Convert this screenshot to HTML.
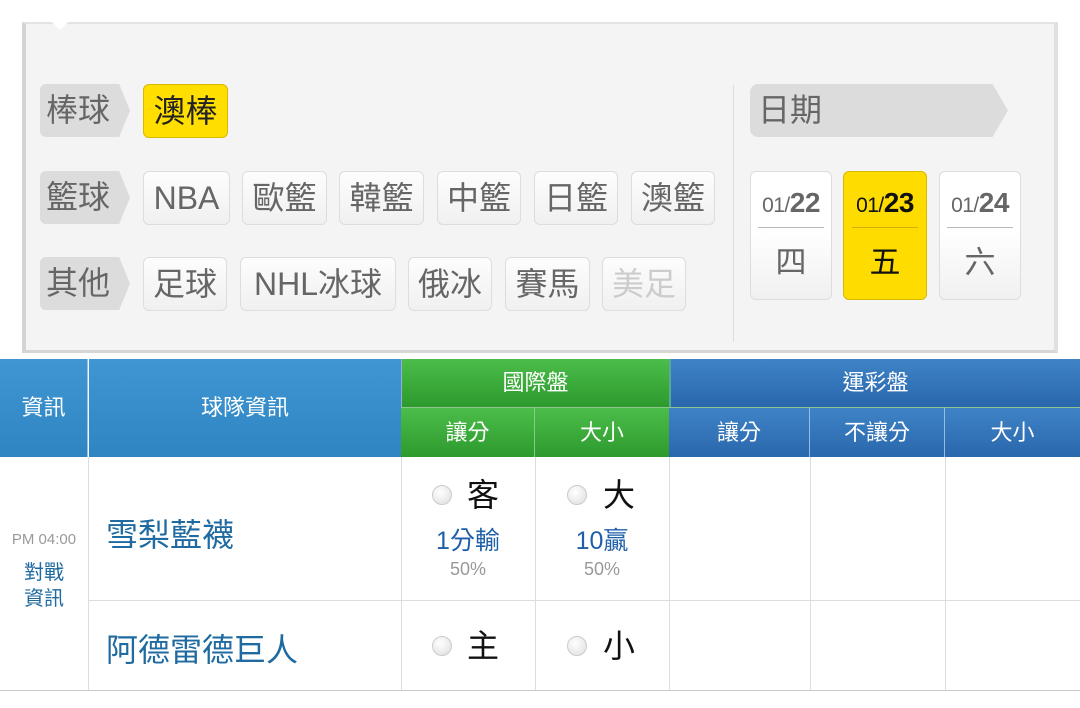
<!DOCTYPE html><html><head><meta charset="utf-8"><style>
*{margin:0;padding:0;box-sizing:border-box}
body{width:1080px;height:708px;background:#fff;position:relative;overflow:hidden;font-family:"Liberation Sans","Noto Sans CJK TC",sans-serif}
.a{position:absolute}
.panel{left:22px;top:22px;width:1036px;height:331px;background:#f4f4f4;border-left:4px solid #d4d4d4;border-right:4px solid #e0e0e0;border-top:2px solid #e4e4e4;border-bottom:3px solid #d6d6d6}
.lab{height:53px;background:#dcdcdc;color:#666;font-size:32px;line-height:53px;padding-left:6px;border-radius:6px 0 0 6px;clip-path:polygon(0 0,88% 0,100% 50%,88% 100%,0 100%)}
.btn{height:54px;background:linear-gradient(#fdfdfd,#f0f0f0);border:1px solid #ddd;border-radius:6px;color:#666;font-size:32px;line-height:52px;text-align:center}
.y{background:#ffde00;border-color:#d9b800;color:#222}
.card{top:171px;width:82px;height:129px;border:1px solid #ddd;border-radius:6px;background:linear-gradient(#fff 0,#fff 46%,#f0f0f0 100%);text-align:center;color:#666}
.card .d{font-size:21px;margin-top:15px;letter-spacing:-0.5px}.card .d b{font-size:28px}
.card hr{border:0;border-top:1px solid #bbb;width:66px;margin:8px auto 0}
.card .w{font-size:31px;margin-top:9px}
.h{color:#fff;font-size:22px;text-align:center}
.b1{background:linear-gradient(#3f96d2,#2f85c2)}
.g{background:linear-gradient(#4bbd4a,#2d9a2d)}
.b2{background:linear-gradient(#3f83c6,#2a67ad)}
.vl{width:1px;background:#ddd}
.hl{height:1px;background:#ddd}
.rad{width:20px;height:20px;border-radius:50%;background:radial-gradient(circle at 40% 35%,#fff,#ddd);border:1px solid #ccc}
.big{font-size:32px;color:#111}
.team{color:#1f6aa0;font-size:32px}
.odd{color:#1f5fa8;font-size:25px;text-align:center;width:134px}
.pct{color:#999;font-size:18px;text-align:center;width:134px}
</style></head><body>
<div class="a panel"></div>
<div class="a" style="left:52px;top:22px;width:16px;height:8px;background:#fff;clip-path:polygon(0 0,100% 0,50% 100%)"></div>
<div class="a lab" style="left:40px;top:84px;width:90px">棒球</div>
<div class="a lab" style="left:40px;top:171px;width:90px">籃球</div>
<div class="a lab" style="left:40px;top:257px;width:90px">其他</div>
<div class="a btn y" style="left:143px;top:84px;width:85px">澳棒</div>
<div class="a btn" style="left:143px;top:171px;width:87px">NBA</div>
<div class="a btn" style="left:242px;top:171px;width:85px">歐籃</div>
<div class="a btn" style="left:339px;top:171px;width:85px">韓籃</div>
<div class="a btn" style="left:437px;top:171px;width:84px">中籃</div>
<div class="a btn" style="left:534px;top:171px;width:84px">日籃</div>
<div class="a btn" style="left:631px;top:171px;width:84px">澳籃</div>
<div class="a btn" style="left:143px;top:257px;width:84px">足球</div>
<div class="a btn" style="left:240px;top:257px;width:156px">NHL冰球</div>
<div class="a btn" style="left:408px;top:257px;width:84px">俄冰</div>
<div class="a btn" style="left:505px;top:257px;width:85px">賽馬</div>
<div class="a btn" style="left:602px;top:257px;width:84px;color:#ccc">美足</div>
<div class="a" style="left:733px;top:85px;width:1px;height:257px;background:#ddd"></div>
<div class="a lab" style="left:750px;top:84px;width:258px;padding-left:8px;clip-path:polygon(0 0,94% 0,100% 50%,94% 100%,0 100%);border-radius:8px 0 0 8px">日期</div>
<div class="a card" style="left:750px"><div class="d">01/<b>22</b></div><hr><div class="w">四</div></div>
<div class="a card" style="left:843px;width:84px;background:#ffdc00;border-color:#d9b800;color:#111"><div class="d">01/<b>23</b></div><hr style="border-color:#d0b000"><div class="w">五</div></div>
<div class="a card" style="left:939px"><div class="d">01/<b>24</b></div><hr><div class="w">六</div></div>

<div class="a h b1" style="left:0;top:359px;width:88px;height:98px;line-height:98px;border-right:1px solid #8cc3e8">資訊</div>
<div class="a h b1" style="left:89px;top:359px;width:312px;height:98px;line-height:98px">球隊資訊</div>
<div class="a h g" style="left:401px;top:359px;width:268px;height:48px;line-height:48px;border-left:1px solid #9ad">國際盤</div>
<div class="a h g" style="left:401px;top:408px;width:134px;height:49px;line-height:49px;border-right:1px solid #8c8">讓分</div>
<div class="a h g" style="left:535px;top:408px;width:134px;height:49px;line-height:49px">大小</div>
<div class="a h b2" style="left:669px;top:359px;width:411px;height:48px;line-height:48px;border-left:2px solid #5a9">運彩盤</div>
<div class="a h b2" style="left:669px;top:408px;width:141px;height:49px;line-height:49px;border-right:1px solid #9bd">讓分</div>
<div class="a h b2" style="left:810px;top:408px;width:135px;height:49px;line-height:49px;border-right:1px solid #9bd">不讓分</div>
<div class="a h b2" style="left:945px;top:408px;width:135px;height:49px;line-height:49px">大小</div>
<div class="a" style="left:401px;top:407px;width:679px;height:1px;background:#8fc58f"></div>

<div class="a vl" style="left:88px;top:457px;height:233px"></div>
<div class="a vl" style="left:401px;top:457px;height:233px"></div>
<div class="a vl" style="left:535px;top:457px;height:233px"></div>
<div class="a vl" style="left:669px;top:457px;height:233px"></div>
<div class="a vl" style="left:810px;top:457px;height:233px"></div>
<div class="a vl" style="left:945px;top:457px;height:233px"></div>
<div class="a hl" style="left:88px;top:600px;width:992px"></div>
<div class="a hl" style="left:0;top:690px;width:1080px;background:#ccc"></div>

<div class="a" style="left:0;top:531px;width:88px;text-align:center;color:#999;font-size:15px">PM 04:00</div>
<div class="a" style="left:0;top:560px;width:88px;text-align:center;color:#1f6aa0;font-size:20px;line-height:26px">對戰<br>資訊</div>
<div class="a team" style="left:106px;top:510px">雪梨藍襪</div>
<div class="a team" style="left:106px;top:625px">阿德雷德巨人</div>

<div class="a rad" style="left:432px;top:485px"></div><div class="a big" style="left:467px;top:470px">客</div>
<div class="a rad" style="left:567px;top:485px"></div><div class="a big" style="left:603px;top:470px">大</div>
<div class="a odd" style="left:401px;top:521px">1分輸</div>
<div class="a odd" style="left:535px;top:521px">10贏</div>
<div class="a pct" style="left:401px;top:559px">50%</div>
<div class="a pct" style="left:535px;top:559px">50%</div>
<div class="a rad" style="left:432px;top:636px"></div><div class="a big" style="left:467px;top:621px">主</div>
<div class="a rad" style="left:567px;top:636px"></div><div class="a big" style="left:603px;top:621px">小</div>
</body></html>
